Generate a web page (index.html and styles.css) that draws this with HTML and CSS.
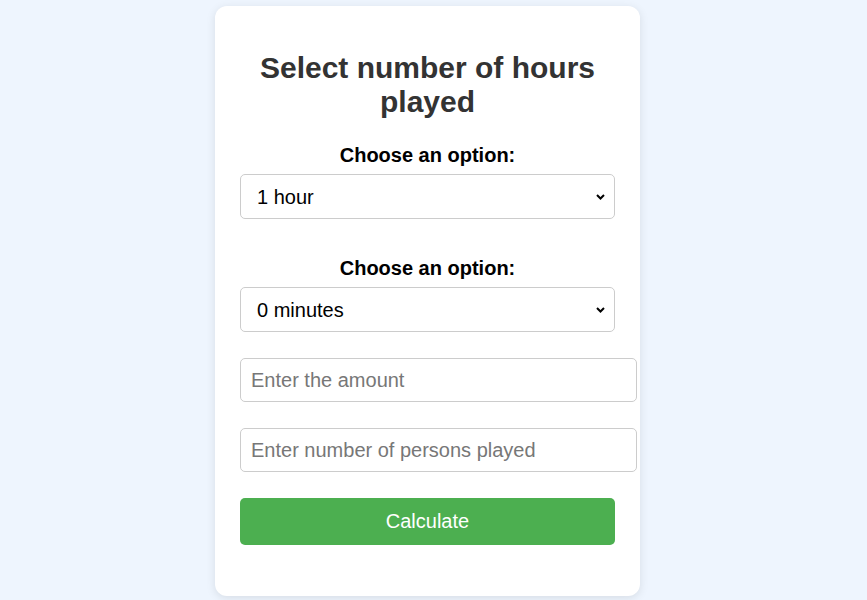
FILE: index.html
```html
<!DOCTYPE html>
<html>
<head>
<meta charset="utf-8">
<link rel="stylesheet" href="styles.css">
</head>
<body>
<div class="card">
  <h2 class="title">Select number of hours played</h2>
  <label class="lbl" for="hours">Choose an option:</label>
  <div class="sel-wrap sel-first">
    <select id="hours" class="sel">
      <option>1 hour</option>
      <option>2 hours</option>
    </select>
    <svg class="chev" width="9" height="6" viewBox="0 0 9 6"><path d="M1 1 L4.5 4.5 L8 1" fill="none" stroke="#000" stroke-width="2"/></svg>
  </div>
  <label class="lbl" for="mins">Choose an option:</label>
  <div class="sel-wrap">
    <select id="mins" class="sel">
      <option>0 minutes</option>
      <option>30 minutes</option>
    </select>
    <svg class="chev" width="9" height="6" viewBox="0 0 9 6"><path d="M1 1 L4.5 4.5 L8 1" fill="none" stroke="#000" stroke-width="2"/></svg>
  </div>
  <input class="inp" type="number" placeholder="Enter the amount">
  <input class="inp" type="number" placeholder="Enter number of persons played">
  <button class="btn">Calculate</button>
</div>
</body>
</html>
```
FILE: styles.css
```css
html, body {
  margin: 0;
  padding: 0;
}
body {
  background: #eef5fe;
  font-family: "Liberation Sans", Arial, sans-serif;
  height: 100vh;
  box-sizing: border-box;
  padding: 6px 12px 0 0;
  display: flex;
  justify-content: center;
  align-items: flex-start;
}
.card {
  background: #fff;
  width: 375px;
  padding: 25px;
  border-radius: 12px;
  box-shadow: 0 2px 10px rgba(0, 0, 0, 0.1);
  display: flex;
  flex-direction: column;
  align-items: stretch;
  text-align: center;
}
.title {
  font-size: 30px;
  line-height: 34px;
  color: #333;
  margin: 20px 0 25px;
  font-weight: bold;
}
.lbl {
  display: block;
  font-size: 20px;
  line-height: 23px;
  font-weight: bold;
  color: #000;
  margin-bottom: 7px;
}
.sel-wrap {
  position: relative;
  display: flex;
  margin-bottom: 26px;
}
.sel-first {
  margin-bottom: 38px;
}
.sel {
  -webkit-appearance: none;
  appearance: none;
  flex: 1;
  font-family: "Liberation Sans", Arial, sans-serif;
  font-size: 20px;
  height: 45px;
  padding: 0 30px 0 16px;
  border: 1px solid #ccc;
  border-radius: 5px;
  background: #fff;
  color: #000;
  margin: 0;
}
.chev {
  position: absolute;
  right: 10px;
  top: 20px;
  pointer-events: none;
}
.inp {
  font-family: "Liberation Sans", Arial, sans-serif;
  font-size: 20px;
  width: 375px;
  box-sizing: content-box;
  height: 22px;
  padding: 10px;
  border: 1px solid #ccc;
  border-radius: 5px;
  margin-bottom: 26px;
  color: #000;
}
.inp::placeholder {
  color: #777;
}
.btn {
  font-family: "Liberation Sans", Arial, sans-serif;
  font-size: 20px;
  height: 47px;
  border: none;
  border-radius: 5px;
  background: #4caf50;
  color: #fff;
  margin-bottom: 26px;
}
```
